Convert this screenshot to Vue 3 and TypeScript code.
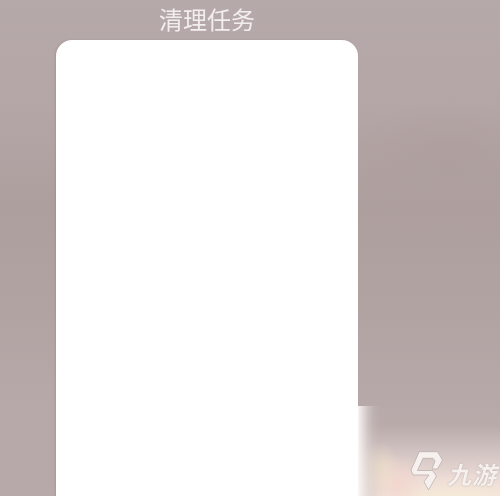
<script setup lang="ts">
const title = '清理任务'
</script>

<template>
  <main class="screen">
    <h1 class="title">{{ title }}</h1>
    <section class="card"></section>
    <div class="glow"></div>
    <div class="mark">
      <svg class="logo" viewBox="10 11 34 40" width="34" height="40">
        <path d="M19.3 11.7 H37.5 L42.5 20 L37.5 29 H32 L35 21 L33 18.3 H23 L17.5 30.5 H32.5 L36.5 36 L28.5 50 L24 41.5 L29 35 H13 L11 30 Z" fill="#f6f1ee" stroke="#b5aaa8" stroke-width="0.7" stroke-linejoin="round" />
      </svg>
      <span class="brand">九游</span>
    </div>
  </main>
</template>

<style scoped>
.screen {
  position: relative;
  width: 500px;
  height: 496px;
  overflow: hidden;
  background:
    radial-gradient(ellipse 120px 70px at 450px 170px, #ad9f9d, transparent),
    linear-gradient(180deg, #b6a9a9 0%, #b4a6a6 22%, #ae9f9f 42%, #b2a3a3 62%, #b7a9a9 82%);
  display: flex;
  flex-direction: column;
  align-items: flex-start;
  font-family: "Noto Sans CJK SC", "Liberation Sans", sans-serif;
}
.title {
  margin: 1px 0 3px 159px;
  font-size: 24px;
  line-height: 36px;
  font-weight: 400;
  color: #f3eeee;
  white-space: nowrap;
  filter: blur(0.4px);
}
.card {
  margin: 0 0 0 56px;
  width: 302px;
  height: 456px;
  background: #fff;
  border-radius: 16px 16px 0 0;
  box-shadow: -1px 0 2px rgba(130, 125, 115, 0.35);
  position: relative;
  z-index: 1;
}
.glow {
  position: absolute;
  left: 358px;
  top: 406px;
  width: 142px;
  height: 90px;
  z-index: 1;
  background:
    linear-gradient(90deg, rgba(250, 247, 246, 0.95) 0%, rgba(240, 235, 234, 0.8) 3%, rgba(222, 214, 213, 0.55) 7%, rgba(205, 196, 196, 0.3) 11%, rgba(190, 180, 180, 0.1) 15%, rgba(190, 180, 180, 0) 19%),
    radial-gradient(ellipse 22px 26px at 20px 62px, rgba(238, 224, 200, 0.75), transparent),
    radial-gradient(ellipse 26px 30px at 40px 78px, rgba(243, 213, 204, 0.8), transparent),
    radial-gradient(ellipse 90px 26px at 100px 96px, #f9ecd8, transparent),
    linear-gradient(180deg, #b7a9a9 0%, #b9abaa 22%, #d2c4c2 52%, #ecdbd6 80%, #f0e0d9 100%);
}
.mark {
  position: absolute;
  left: 410px;
  top: 451px;
  display: flex;
  align-items: center;
  gap: 3px;
  z-index: 2;
  filter: blur(0.3px);
}
.logo {
  display: block;
}
.brand {
  margin-top: 6px;
  font-size: 24px;
  line-height: 30px;
  font-weight: 700;
  font-style: italic;
  letter-spacing: 1px;
  color: #f6f1ee;
  text-shadow: 0 0 1.5px #a89c9a;
  white-space: nowrap;
}
</style>
